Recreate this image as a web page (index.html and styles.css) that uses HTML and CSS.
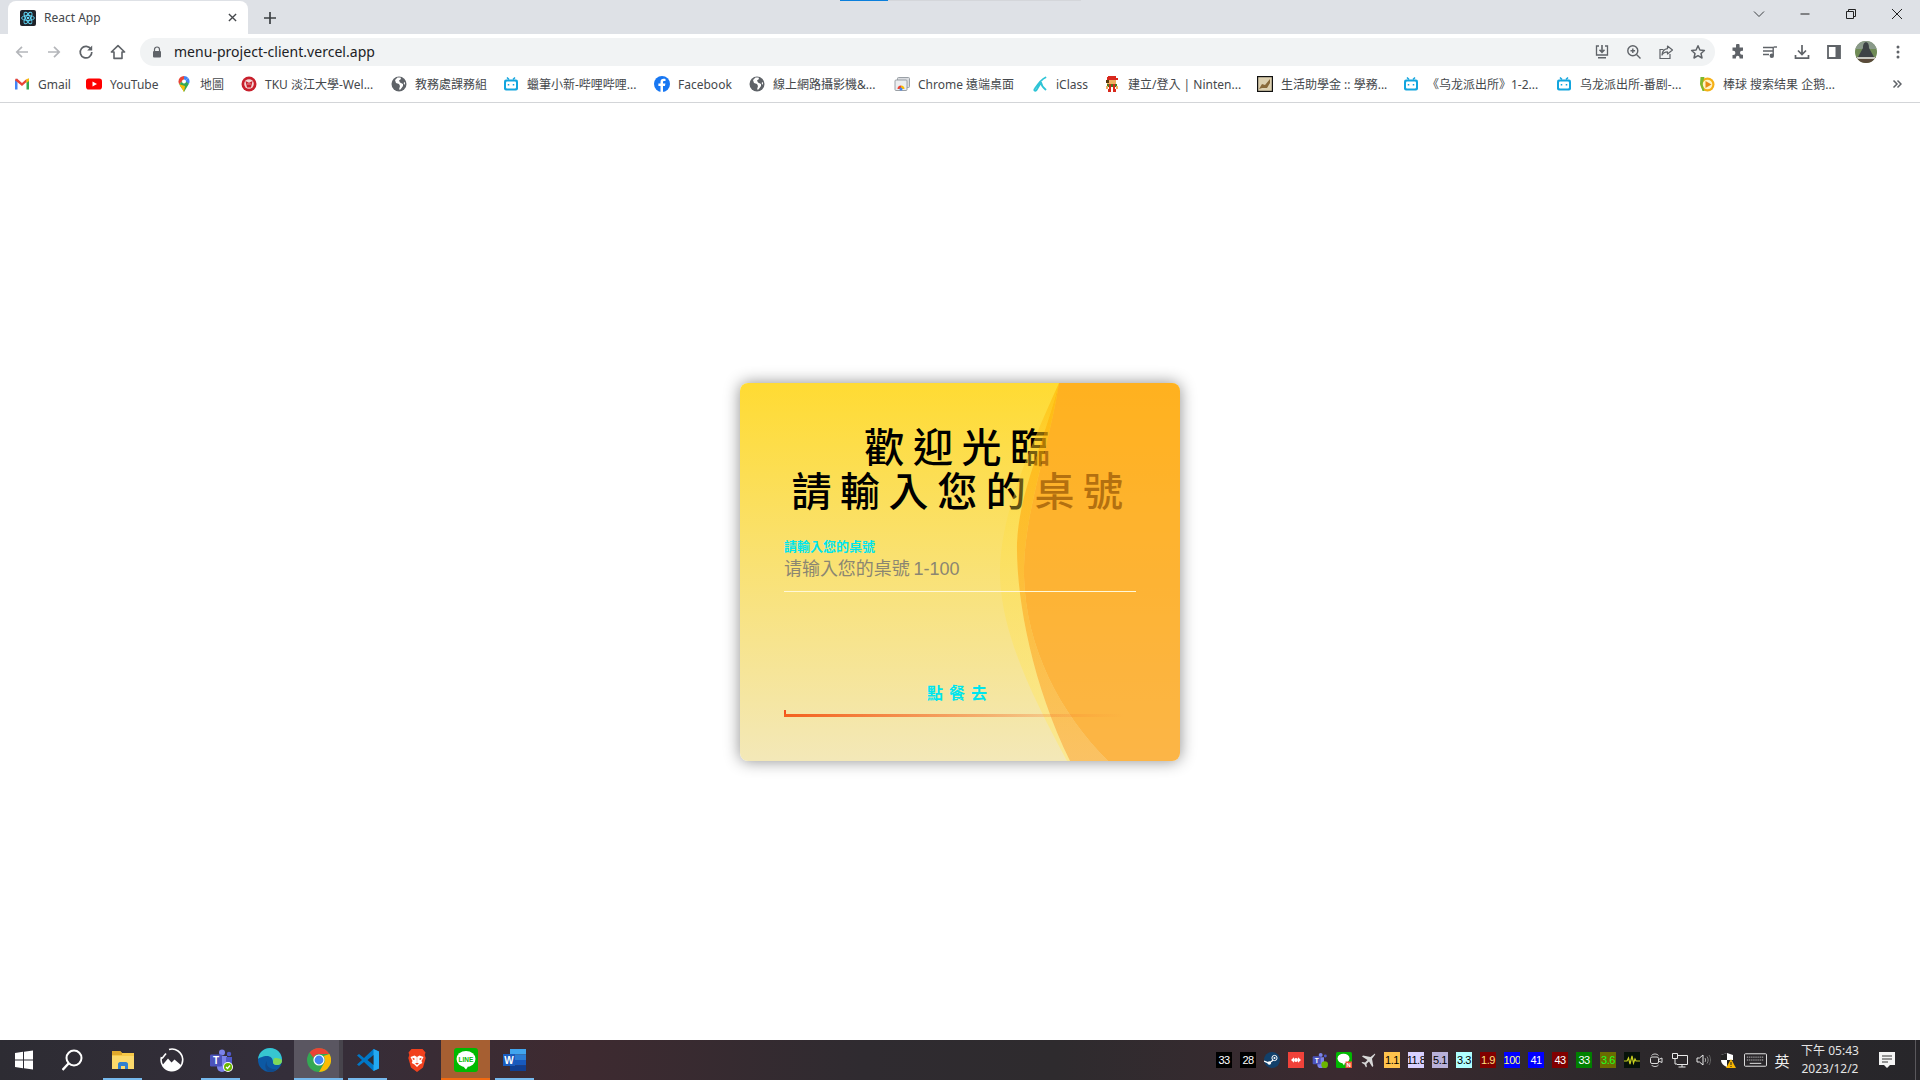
FILE: index.html
```html
<!DOCTYPE html>
<html lang="zh-Hant">
<head>
<meta charset="utf-8">
<title>React App</title>
<link rel="stylesheet" href="styles.css">
</head>
<body>
<header class="chrome">
  <div class="tabstrip">
    <div class="tab">
      <svg class="ic16" viewBox="0 0 16 16"><rect width="16" height="16" rx="2" fill="#20232a"/><g fill="none" stroke="#61dafb" stroke-width=".9"><ellipse cx="8" cy="8" rx="6.4" ry="2.5"/><ellipse cx="8" cy="8" rx="6.4" ry="2.5" transform="rotate(60 8 8)"/><ellipse cx="8" cy="8" rx="6.4" ry="2.5" transform="rotate(120 8 8)"/></g><circle cx="8" cy="8" r="1.3" fill="#61dafb"/></svg>
      <span class="tab-title">React App</span>
      <svg class="tab-x" viewBox="0 0 10 10"><path d="M1 1l8 8M9 1L1 9" stroke="#45484c" stroke-width="1.5"/></svg>
    </div>
    <svg class="newtab" viewBox="0 0 12 12"><path d="M6 0v12M0 6h12" stroke="#3c4043" stroke-width="1.7"/></svg>
    <div class="progress"><span></span></div>
    <div class="winctl">
      <svg class="wc" viewBox="0 0 12 12"><path d="M1 3.5l5 5 5-5" fill="none" stroke="#3c4043" stroke-width="1"/></svg>
      <svg class="wc" viewBox="0 0 12 12"><path d="M1.5 6h9" stroke="#222" stroke-width="1"/></svg>
      <svg class="wc" viewBox="0 0 12 12"><path d="M1.5 3.5h7v7h-7zM3.5 3.5v-2h7v7h-2" fill="none" stroke="#222" stroke-width="1"/></svg>
      <svg class="wc" viewBox="0 0 12 12"><path d="M1 1l10 10M11 1L1 11" stroke="#222" stroke-width="1"/></svg>
    </div>
  </div>
  <div class="toolbar">
    <svg class="tb first" viewBox="0 0 16 16"><path d="M14 8H3M8 2.8L2.8 8 8 13.2" fill="none" stroke="#b4b6ba" stroke-width="1.7"/></svg>
    <svg class="tb" viewBox="0 0 16 16"><path d="M2 8h11M8 2.8L13.2 8 8 13.2" fill="none" stroke="#b4b6ba" stroke-width="1.7"/></svg>
    <svg class="tb" viewBox="0 0 16 16"><path d="M13 5.2A5.8 5.8 0 1 0 13.8 8" fill="none" stroke="#5f6368" stroke-width="1.7"/><path d="M14.2 1.6v5h-5z" fill="#5f6368"/></svg>
    <svg class="tb" viewBox="0 0 16 16"><path d="M8 1.6L1.4 8H4v6.4h8V8h2.6zM6.8 14.4" fill="none" stroke="#5f6368" stroke-width="1.6" stroke-linejoin="round"/></svg>
    <div class="omnibox">
      <svg class="lock" viewBox="0 0 10 12"><path d="M2.5 5V3.5a2.5 2.5 0 0 1 5 0V5" fill="none" stroke="#5f6368" stroke-width="1.2"/><rect x="1" y="5" width="8" height="6.5" rx="1" fill="#5f6368"/></svg>
      <span class="url">menu-project-client.vercel.app</span>
      <div class="omni-actions">
        <svg class="oa" viewBox="0 0 16 16"><path d="M5 2H2.500v9h11V2H11" fill="none" stroke="#5f6368" stroke-width="1.300"/><path d="M8 1v7M5.500 5.800L8 8.400l2.500-2.600" fill="none" stroke="#5f6368" stroke-width="1.600"/><path d="M4 13h8v1.500H4z" fill="#5f6368"/></svg>
        <svg class="oa" viewBox="0 0 16 16"><circle cx="6.800" cy="6.800" r="5" fill="none" stroke="#5f6368" stroke-width="1.400"/><path d="M10.500 10.500l4 4M4.500 6.800h4.600M6.800 4.500v4.600" stroke="#5f6368" stroke-width="1.400"/></svg>
        <svg class="oa" viewBox="0 0 16 16"><path d="M5.500 5.500H2v9h10V10" fill="none" stroke="#5f6368" stroke-width="1.200"/><path d="M9.500 2l5 4-5 4V7.800C7 7.800 5 9 4 11c.3-3.500 2.500-6 5.500-6.300z" fill="none" stroke="#5f6368" stroke-width="1.200" stroke-linejoin="round"/></svg>
        <svg class="oa" viewBox="0 0 16 16"><path d="M8 1.800l1.900 4.200 4.500.5-3.400 3 1 4.500L8 11.700 4 14l1-4.500-3.400-3 4.500-.5z" fill="none" stroke="#5f6368" stroke-width="1.500" stroke-linejoin="round"/></svg>
      </div>
    </div>
    <div class="tb-right">
      <svg class="tbr" viewBox="0 0 16 16"><path d="M6 1.500a1.800 1.800 0 0 1 3.600 0V3.500H13v3.300h-1a2 2 0 0 0 0 4h1v3.700H9.500v-1a1.800 1.800 0 0 0-3.600 0v1H2.500v-3.500h.8a2.100 2.100 0 0 0 0-4.200h-.8V3.500H6z" fill="#5f6368"/></svg>
      <svg class="tbr" viewBox="0 0 16 16"><path d="M1 3.500h10M1 7h10M1 10.500h6" stroke="#5f6368" stroke-width="1.300"/><path d="M11.200 3v8.500" stroke="#5f6368" stroke-width="1.400"/><path d="M11.500 3H15" stroke="#5f6368" stroke-width="1.400"/><circle cx="9.800" cy="11.800" r="2.200" fill="#5f6368"/></svg>
      <svg class="tbr" viewBox="0 0 16 16"><path d="M8 1v9M4 6.500L8 10.500l4-4" fill="none" stroke="#5f6368" stroke-width="1.700"/><path d="M1.500 11v3.200h13V11" fill="none" stroke="#5f6368" stroke-width="1.700"/></svg>
      <svg class="tbr" viewBox="0 0 16 16"><path d="M2 2h12v12H2z" fill="none" stroke="#5f6368" stroke-width="1.800"/><path d="M9.500 2H14v12H9.500z" fill="#5f6368"/></svg>
      <svg class="avatar" viewBox="0 0 24 24"><defs><clipPath id="av"><circle cx="12" cy="12" r="11"/></clipPath></defs><g clip-path="url(#av)"><rect width="24" height="24" fill="#6f8a55"/><rect y="0" width="24" height="9" fill="#8a9a8a"/><path d="M12 2c3 1 3 4 3 6l5 9H4l5-9c0-2 0-5 3-6z" fill="#3d4245"/><rect y="17" width="24" height="7" fill="#5a4a3a"/><rect x="3" y="17" width="18" height="2" fill="#c8c8c0"/></g></svg>
      <svg class="tbr dots" viewBox="0 0 16 16"><circle cx="8" cy="3" r="1.500" fill="#5f6368"/><circle cx="8" cy="8" r="1.500" fill="#5f6368"/><circle cx="8" cy="13" r="1.500" fill="#5f6368"/></svg>
    </div>
  </div>
  <nav class="bookmarks">
    <a class="bm"><svg class="ic16" viewBox="0 0 16 16"><path d="M1 13.500V4l2.500-1.500V13.500z" fill="#4285f4"/><path d="M12.500 13.500V4L15 2.500v11z" fill="#34a853"/><path d="M3.500 3L8 7l4.500-4v3L8 10 1 4.200 1.800 2.600z" fill="#ea4335"/><path d="M12.500 3L15 2.400V5l-2.500 2z" fill="#fbbc04"/></svg><span>Gmail</span></a>
    <a class="bm"><svg class="ic16" viewBox="0 0 16 16"><rect y="2.500" width="16" height="11" rx="2.800" fill="#f00"/><path d="M6.500 5.500L11 8l-4.500 2.500z" fill="#fff"/></svg><span>YouTube</span></a>
    <a class="bm"><svg class="ic16" viewBox="0 0 16 16"><path d="M8 0a5.500 5.500 0 0 0-5.500 5.500c0 1 .3 2 .8 2.800L8 3.500z" fill="#ea4335"/><path d="M8 0a5.500 5.500 0 0 1 4.300 2L8 5.500z" fill="#4285f4"/><path d="M12.300 2a5.500 5.500 0 0 1 .5 6.100L8 5.500z" fill="#4285f4"/><path d="M3.300 8.300L8 3.500l4.800 4.600L8 16c-1.500-3-3.500-5-4.700-7.700z" fill="#34a853"/><path d="M3.300 8.300C4.500 11 6.500 13 8 16l1-6z" fill="#fbbc04"/><circle cx="8" cy="5.500" r="2" fill="#fff"/></svg><span>地圖</span></a>
    <a class="bm"><svg class="ic16" viewBox="0 0 16 16"><circle cx="8" cy="8" r="7.500" fill="#c8202c"/><circle cx="8" cy="8" r="4.800" fill="#f4d8d8"/><path d="M4.500 5L8 6.800 11.500 5 10 11.500H6z" fill="#c8202c"/><path d="M6.500 8h1M8.500 8h1" stroke="#fff"/></svg><span>TKU 淡江大學-Wel...</span></a>
    <a class="bm"><svg class="ic16" viewBox="0 0 16 16"><circle cx="8" cy="8" r="7.500" fill="#5f6368"/><path d="M6.500 1.500L4 4l1 3 3 1 1 2-1 3.500h1.500L12 10V8L9 6.500 8 4.500l2-1.500-.5-1.500zM14 6l-1.500 1 1.500 2z" fill="#fff"/></svg><span>教務處課務組</span></a>
    <a class="bm"><svg class="ic16" viewBox="0 0 16 16"><use href="#bili"/></svg><span>蠟筆小新-哔哩哔哩...</span></a>
    <a class="bm"><svg class="ic16" viewBox="0 0 16 16"><circle cx="8" cy="8" r="8" fill="#1877f2"/><path d="M9 16v-6h2l.4-2.400H9V6.200c0-.7.3-1.200 1.300-1.200h1.200V3c-.5-.1-1.200-.2-1.900-.2-2 0-3.100 1.200-3.100 3.200v1.600H4.400V10h2.100v6z" fill="#fff"/></svg><span>Facebook</span></a>
    <a class="bm"><svg class="ic16" viewBox="0 0 16 16"><circle cx="8" cy="8" r="7.500" fill="#5f6368"/><path d="M6.500 1.500L4 4l1 3 3 1 1 2-1 3.500h1.500L12 10V8L9 6.500 8 4.500l2-1.500-.5-1.500zM14 6l-1.500 1 1.500 2z" fill="#fff"/></svg><span>線上網路攝影機&amp;...</span></a>
    <a class="bm"><svg class="ic16" viewBox="0 0 16 16"><rect x="3.500" y="1.500" width="12" height="10" rx="1" fill="#dadce0" stroke="#9aa0a6"/><rect x="1" y="4" width="12" height="10.500" rx="1" fill="#eceef0" stroke="#9aa0a6"/><path d="M3.500 13a3.500 3.500 0 0 1 3.500-3.500V13z" fill="#ea4335"/><path d="M7 9.500A3.500 3.500 0 0 1 10.500 13H7z" fill="#fbbc04"/><circle cx="7" cy="13" r="1.500" fill="#4285f4"/></svg><span>Chrome 遠端桌面</span></a>
    <a class="bm"><svg class="ic16" viewBox="0 0 16 16"><path d="M13.500 1.500C10 3 6 8 3 12.500c-1.500 2 0 3 1.500 1.500C7 10 8 8 9 6.500c.5 3 2 5 4.500 7" fill="none" stroke="#2ec4d6" stroke-width="1.800" stroke-linecap="round"/></svg><span>iClass</span></a>
    <a class="bm"><svg class="ic16" viewBox="0 0 16 16" shape-rendering="crispEdges"><path d="M4 0h8v2h2v2H3V1z" fill="#d8281c"/><path d="M3 4h9v4H3z" fill="#f0b060"/><path d="M2 4h3v3H2z" fill="#5a3a10"/><path d="M3 8h10v3H3z" fill="#4a7a20"/><path d="M5 8h2v8H4v-3h1zM9 8h2v5h1v3H9z" fill="#d8281c"/><path d="M2 10h2v3H2zM12 10h2v3h-2z" fill="#f0b060"/></svg><span>建立/登入 | Ninten...</span></a>
    <a class="bm"><svg class="ic16" viewBox="0 0 16 16"><rect x=".6" y=".6" width="14.800" height="14.800" fill="#ddd0b0" stroke="#111" stroke-width="1.200"/><path d="M2 13l3-5 3 1 5-6v4l-3 5H5z" fill="#8a6a3a"/></svg><span>生活助學金 :: 學務...</span></a>
    <a class="bm"><svg class="ic16" viewBox="0 0 16 16"><use href="#bili"/></svg><span>《乌龙派出所》1-2...</span></a>
    <a class="bm"><svg class="ic16" viewBox="0 0 16 16"><use href="#bili"/></svg><span>乌龙派出所-番剧-...</span></a>
    <a class="bm"><svg class="ic16" viewBox="0 0 16 16"><circle cx="8.500" cy="8.500" r="7" fill="#f5b015"/><circle cx="8.500" cy="8.500" r="4.800" fill="#fff3c4"/><path d="M6.500 5l6 3.500-6 3.500z" fill="#e88a10"/><path d="M1.500 1h4l-2 7 2 7h-2L1 8z" fill="#7cb82f"/></svg><span>棒球 搜索结果 企鹅...</span></a>
    <i></i>
    <svg class="more" viewBox="0 0 10 10"><path d="M1.500 1.500L5 5 1.500 8.500M5.500 1.500L9 5 5.500 8.500" fill="none" stroke="#5f6368" stroke-width="1.500"/></svg>
  </nav>
</header>

<main class="page">
  <section class="card">
    <h1 class="title">歡迎光臨<br>請輸入您的桌號</h1>
    <svg class="waves" viewBox="0 0 440 378" preserveAspectRatio="none">
      <defs>
        <linearGradient id="w1" x1="0" y1="0" x2="0" y2="1"><stop offset="0" stop-color="#ffb400" stop-opacity=".6"/><stop offset=".35" stop-color="#ffdc40" stop-opacity=".35"/><stop offset="1" stop-color="#ffe97a" stop-opacity=".6"/></linearGradient>
        <linearGradient id="w2" x1="0" y1="0" x2="0" y2="1"><stop offset="0" stop-color="#ffb000" stop-opacity=".7"/><stop offset="1" stop-color="#ffa82c" stop-opacity=".6"/></linearGradient>
      </defs>
      <path fill="url(#w1)" d="M319 0C292 60 258 135 260 194C262 255 296 320 327 378H330C292 300 276 215 277 160C279 110 302 65 319 0z"/>
      <path fill="url(#w2)" d="M319 0C302 65 279 110 277 160C276 215 292 300 330 378H368C320 330 286 265 284 194C283 130 308 70 319 0z"/>
      <path fill="#ffa017" fill-opacity=".7" d="M319 0C308 70 283 130 284 194C286 265 320 330 368 378H440V0z"/>
    </svg>
    <div class="field">
      <label class="field-label" for="table">請輸入您的桌號</label>
      <input class="field-input" id="table" type="text" placeholder="请输入您的桌號 1-100">
    </div>
    <button class="go" type="button">點餐去</button>
  </section>
</main>

<footer class="taskbar">
  <div class="apps">
    <div class="cell"><svg class="ti" viewBox="1 0 24 24"><path d="M3 5l8-1.200V11.400H3zM12 3.700L21 2.500v8.900h-9zM3 12.500h8v7.700l-8-1.200zM12 12.500h9v9l-9-1.200z" fill="#fff"/></svg></div>
    <div class="cell"><svg class="ti" viewBox="2 0 24 24"><circle cx="14" cy="10" r="7.500" fill="none" stroke="#fff" stroke-width="2"/><path d="M8.500 15.500L2.500 22" stroke="#fff" stroke-width="2.400"/></svg></div>
    <div class="cell run"><svg class="ti" viewBox="0 0 24 24"><path d="M1 3h8l2 2h12v16H1z" fill="#f7c948"/><path d="M1 3h8l2 2v2H1z" fill="#e0a92c"/><path d="M1 8h22v13H1z" fill="#fbd96b"/><path d="M7 21v-5c0-1 1-2 2-2h6c1 0 2 1 2 2v5h-3v-3h-4v3z" fill="#2f80d0"/></svg></div>
    <div class="cell"><svg class="ti" viewBox="0 0 24 24"><path d="M9 1.500A10.800 10.800 0 1 1 1.500 9" fill="none" stroke="#fff" stroke-width="1.600"/><path d="M2.500 17L8 10.500l3.500 4 3-3L21.500 17.500A11 11 0 0 1 2.500 17z" fill="#fff"/><path d="M2 10.500L6 5.500" stroke="#fff" stroke-width="1.600"/></svg></div>
    <div class="cell run"><svg class="ti" viewBox="0 0 24 24"><circle cx="13" cy="4.500" r="3" fill="#7b83eb"/><circle cx="20" cy="6" r="2.200" fill="#5059c9"/><path d="M8 8h10v11a5 5 0 0 1-10 0z" fill="#7b83eb"/><path d="M17 9h6v8a3 3 0 0 1-6 0z" fill="#5059c9"/><rect x="1" y="6.500" width="12" height="12" rx="1.200" fill="#4b53bc"/><text x="7" y="16" class="svgt" font-size="10" fill="#fff" text-anchor="middle">T</text><circle cx="19" cy="19" r="5" fill="#fff"/><circle cx="19" cy="19" r="4" fill="#6bb700"/><path d="M17 19l1.500 1.500 2.500-3" fill="none" stroke="#fff" stroke-width="1.200"/></svg></div>
    <div class="cell"><svg class="ti" viewBox="0 0 24 24"><circle cx="12" cy="12" r="12" fill="#0c59a4"/><path d="M0 11C1 4 6 0 12 0c7 0 12 5 12 12 0 3-2 5-5 5-3 0-4-1-4-3 0-4-3-6-6-6-4 0-8 2-9 3z" fill="#37c6d0"/><path d="M13 24C7 24 6 17 9 13c-2 4 3 9 9 8-1 2-3 3-5 3z" fill="#114a8b"/><path d="M17 10c4 0 7 1 7 3 0 2-2 4-5 4-3 0-4-2-4-3 0-2 1-4 2-4z" fill="#7fd858"/></svg></div>
    <div class="cell active run"><svg class="ti" viewBox="0 0 24 24"><use href="#chrome"/></svg></div>
    <div class="cell run"><svg class="ti" viewBox="0 0 24 24"><path d="M17.500 1L23 3.500v17L17.500 23 8 14l-5 4-2-1.500L6 12 1 7.500 3 6l5 4z" fill="#0078c8"/><path d="M17.500 1L23 3.500v17L17.500 23z" fill="#23a9f2"/><path d="M17.500 7l-6 5 6 5z" fill="#2e2b33"/></svg></div>
    <div class="cell"><svg class="ti" viewBox="0 0 24 24"><path d="M6.500 1h11l3 3.500-.8 2.500 1 3-2.700 9.500L12 24l-6-4.500L3.300 10l1-3-.8-2.500z" fill="#f1411e"/><path d="M5.500 9l4-1.500L12 9l2.500-1.500 4 1.500-2 4 .8 2-2.800 1.500L12 19l-2.500-2.500L6.700 15l.8-2z" fill="#fff"/><path d="M7.500 9.800l2 .8v1.200H8zM16.500 9.800l-2 .8v1.200H16z" fill="#f1411e"/><path d="M10 15h4l-2 2z" fill="#f1411e"/><path d="M12 9v6" stroke="#f7b8a8" stroke-width=".8"/></svg></div>
    <div class="cell line"><svg class="ti" viewBox="0 0 24 24"><rect width="24" height="24" rx="3" fill="#00b900"/><ellipse cx="12" cy="11" rx="9.500" ry="8" fill="#fff"/><path d="M9 18l3 3.500 2-3z" fill="#fff"/><text x="12" y="13.500" class="svgt" font-size="6.500" fill="#00b900" text-anchor="middle">LINE</text></svg></div>
    <div class="cell run"><svg class="ti" viewBox="0 0 24 24"><rect x="7" y="1" width="16" height="5.500" fill="#41a5ee"/><rect x="7" y="6.500" width="16" height="5.500" fill="#2b7cd3"/><rect x="7" y="12" width="16" height="5.500" fill="#185abd"/><rect x="7" y="17.500" width="16" height="5.500" fill="#103f91"/><rect x="0" y="6" width="12" height="12" fill="#1a5cbe"/><text x="6" y="15.500" class="svgt" font-size="10" fill="#fff" text-anchor="middle">W</text></svg></div>
  </div>
  <div class="tray">
    <div class="tc"><b class="num n-k">33</b></div>
    <div class="tc"><b class="num n-k">28</b></div>
    <div class="tc"><svg class="t16" viewBox="0 0 16 16"><circle cx="8" cy="8" r="8" fill="#12406a"/><circle cx="10.500" cy="6" r="2.600" fill="none" stroke="#fff" stroke-width="1"/><circle cx="10.500" cy="6" r="1" fill="#fff"/><path d="M0 9l5 2.200 4-3" fill="none" stroke="#fff" stroke-width="1.300"/><circle cx="5.300" cy="11" r="1.800" fill="#fff"/></svg></div>
    <div class="tc"><svg class="t16" viewBox="0 0 16 16"><rect width="16" height="16" fill="#f0423a"/><path d="M3 8l3-2.800v5.600zM13 8l-3-2.800v5.600z" fill="#fff"/><circle cx="8" cy="8" r="2" fill="#fff"/></svg></div>
    <div class="tc"><svg class="t16" viewBox="0 0 24 24"><circle cx="13" cy="4.500" r="3" fill="#7b83eb"/><circle cx="20" cy="6" r="2.200" fill="#5059c9"/><path d="M8 8h10v11a5 5 0 0 1-10 0z" fill="#7b83eb"/><rect x="1" y="6.500" width="12" height="12" rx="1.200" fill="#4b53bc"/><text x="7" y="16" class="svgt" font-size="10" fill="#fff" text-anchor="middle">T</text><circle cx="19" cy="19" r="5" fill="#6bb700"/></svg></div>
    <div class="tc"><svg class="t16" viewBox="0 0 16 16"><rect width="16" height="16" rx="1.500" fill="#00b900"/><ellipse cx="7.500" cy="6.500" rx="6" ry="4.800" fill="#fff"/><path d="M6 10.500l2 3 1-3z" fill="#fff"/><rect x="9.500" y="9.500" width="6.500" height="6.500" fill="#f0523a"/><text x="12.700" y="15" class="svgt" font-size="6" fill="#fff" text-anchor="middle">N</text></svg></div>
    <div class="tc"><svg class="t16" viewBox="0 0 16 16"><path d="M15 1.500L10.500 5 3 3.500 2 4.500 7.500 8 5 10.500 2.500 10l-1 .8 3 1.600 1.500 3 .9-1-.5-2.400L9 9.500l3.300 5.500 1-1L12 6.800 15.200 2.500z" fill="#d8d8d8"/></svg></div>
    <div class="tc"><b class="num n-1">1.1</b></div>
    <div class="tc"><b class="num n-2">11.8</b></div>
    <div class="tc"><b class="num n-3">5.1</b></div>
    <div class="tc"><b class="num n-4">3.3</b></div>
    <div class="tc"><b class="num n-5">1.9</b></div>
    <div class="tc"><b class="num n-6">100</b></div>
    <div class="tc"><b class="num n-7">41</b></div>
    <div class="tc"><b class="num n-8">43</b></div>
    <div class="tc"><b class="num n-9">33</b></div>
    <div class="tc"><b class="num n-10">3.6</b></div>
    <div class="tc"><svg class="t16" viewBox="0 0 16 16"><rect width="16" height="16" fill="#06120a"/><path d="M0 9h3l1.500-3 1.500 6 2-8 1.500 7 1.500-4 1 2h4" fill="none" stroke="#c8d020" stroke-width="1.200"/></svg></div>
    <div class="tc"><svg class="t16" viewBox="0 0 16 16"><path d="M3.500 3.500C5 1.500 9 1.500 10.500 3.500M3.500 13C5 15 9 15 10.500 13" fill="none" stroke="#ddd" stroke-width=".9"/><rect x="2.500" y="5" width="8" height="6.500" rx="1.500" fill="none" stroke="#ddd"/><path d="M10.500 7.500L14 6v4.500l-3.500-1.500" fill="none" stroke="#ddd"/></svg></div>
    <div class="tc"><svg class="t16" viewBox="0 0 16 16"><path d="M5 3.500h10.500v9H5M10 12.500V15M6.500 15h7M.5 1.500h5v5h-5zM3 6.500v5.500h2" fill="none" stroke="#e8e8e8" stroke-width="1"/></svg></div>
    <div class="tc"><svg class="t16" viewBox="0 0 16 16"><path d="M1 6h2.500L7 3v10L3.500 10H1z" fill="none" stroke="#e8e8e8"/><path d="M9 6c.8 1 .8 3 0 4" fill="none" stroke="#aaa"/><path d="M11 4.500c1.500 2 1.500 5 0 7" fill="none" stroke="#888"/><path d="M13 3c2 3 2 7 0 10" fill="none" stroke="#666"/></svg></div>
    <div class="tc"><svg class="t16" viewBox="0 0 16 16"><path d="M1 3l6-2 6 2v5c0 3.500-3 6-6 7-3-1-6-3.500-6-7z" fill="#fff"/><path d="M7 1v7H1V3zM7 8h6c0 3.500-3 6-6 7z" fill="#222"/><path d="M11 7l5 9H6z" fill="#f7b500"/><path d="M11 10v3M11 14v1" stroke="#222"/></svg></div>
    <div class="tc tc-kbd"><svg class="kbd" viewBox="0 0 24 14"><rect x=".5" y=".5" width="23" height="13" rx="1" fill="none" stroke="#e8e8e8"/><path d="M3 4h18M3 7h18" stroke="#e8e8e8" stroke-dasharray="1 1"/><path d="M6 10.500h12" stroke="#e8e8e8"/></svg></div>
    <div class="tc ime">英</div>
    <div class="clock"><span>下午 05:43</span><span>2023/12/2</span></div>
    <div class="notif"><svg class="t20" viewBox="0 0 20 20"><path d="M2 2h16v13h-5l-3 3-3-3H2z" fill="#f4f4f4"/><path d="M5 6h10M5 9h10M5 12h6" stroke="#333"/></svg></div>
    <div class="showdesk"></div>
  </div>
</footer>

<svg class="defs" viewBox="0 0 1 1">
  <defs>
    <symbol id="bili" viewBox="0 0 16 16"><path d="M4 1.500l2 2M12 1.500l-2 2" stroke="#12a5de" stroke-width="1.500"/><rect x="1" y="3.500" width="14" height="11" rx="2" fill="#12a5de"/><rect x="3" y="5.500" width="10" height="7" rx="1" fill="#fff"/><path d="M5.500 8v1.600M10.500 8v1.600" stroke="#12a5de" stroke-width="1.500"/></symbol>
    <symbol id="chrome" viewBox="0 0 24 24"><circle cx="12" cy="12" r="12" fill="#34a853"/><path d="M12 0a12 12 0 0 1 10.400 6H12a6 6 0 0 0-5.600 3.800L2.600 4.500A12 12 0 0 1 12 0z" fill="#ea4335"/><path d="M22.400 6A12 12 0 0 1 12 24l5-8.800A6 6 0 0 0 16.500 8z" fill="#fbbc04"/><circle cx="12" cy="12" r="5.600" fill="#fff"/><circle cx="12" cy="12" r="4.400" fill="#4285f4"/></symbol>
  </defs>
</svg>
</body>
</html>
```
FILE: styles.css
```css
* { box-sizing: border-box; }
html, body { margin: 0; height: 100%; }
body {
  display: flex;
  flex-direction: column;
  height: 100vh;
  overflow: hidden;
  background: #fff;
  font-family: "Noto Sans", "Noto Sans CJK TC", sans-serif;
  color: #3c4043;
}
svg { display: block; flex: none; }
.defs { position: absolute; width: 0; height: 0; }
.ic16 { width: 16px; height: 16px; }

/* browser chrome */
.chrome { flex: none; height: 103px; border-bottom: 1px solid #d3d5d8; }
.tabstrip {
  position: relative;
  display: flex;
  align-items: center;
  height: 34px;
  padding-left: 8px;
  background: #dee1e6;
}
.tab {
  display: flex;
  align-items: center;
  align-self: flex-end;
  width: 240px;
  height: 33px;
  padding: 0 11px 0 12px;
  background: #fff;
  border-radius: 8px 8px 0 0;
}
.tab-title { margin-left: 8px; font-size: 12px; color: #45484c; flex: 1; }
.tab-x { width: 9px; height: 9px; }
.newtab { width: 12px; height: 12px; margin-left: 16px; margin-top: 1px; }
.progress {
  position: absolute;
  left: 840px;
  top: 0;
  width: 241px;
  height: 1px;
  background: #d4d6da;
}
.progress span { display: block; width: 48px; height: 1px; background: #0a7fdc; }
.winctl {
  display: flex;
  margin-left: auto;
  margin-right: 17px;
  margin-top: -7px;
  gap: 34px;
}
.wc { width: 12px; height: 12px; }
.toolbar {
  display: flex;
  align-items: center;
  height: 32px;
  padding: 4px 0 0 14px;
  background: #fff;
}
.tb { width: 16px; height: 16px; margin-right: 16px; }
.omnibox {
  display: flex;
  align-items: center;
  width: 1575px;
  height: 28px;
  margin-left: -2px;
  padding: 0 9px 0 12px;
  background: #f1f3f4;
  border-radius: 14px;
}
.lock { width: 10px; height: 12px; margin-right: 12px; }
.url { margin-top: -2px; font-size: 14px; letter-spacing: .03px; color: #202124; }
.omni-actions { display: flex; gap: 16px; margin-left: auto; }
.oa { width: 16px; height: 16px; }
.tb-right { display: flex; align-items: center; margin-left: 15px; gap: 16px; }
.tbr { width: 16px; height: 16px; }
.avatar { width: 24px; height: 24px; margin: 0 -4px; }
.bookmarks {
  display: grid;
  grid-template-columns: 72px 90px 65px 150px 112px 151px 95px 145px 138px 72px 153px 146px 153px 143px 170px 1fr 24px;
  align-items: center;
  height: 36px;
  padding-left: 14px;
  padding-right: 18px;
  background: #fff;
  font-size: 12px;
}
.bm { display: flex; align-items: center; gap: 8px; white-space: nowrap; color: #45484c; }
.more { width: 10px; height: 10px; justify-self: end; }

/* main */
.page {
  flex: 1;
  min-height: 0;
  display: flex;
  align-items: center;
  justify-content: center;
}
.card {
  position: relative;
  width: 440px;
  height: 378px;
  padding: 40px 44px 0;
  border-radius: 8px;
  background: linear-gradient(180deg, #ffdb33 0%, #f3e8b8 100%);
  box-shadow: 0 0 16px rgba(0, 0, 0, .45);
  overflow: clip;
  overflow-clip-margin: 0;
}
.title {
  margin: 0;
  padding-left: 3px;
  font: 500 40px/44px "Noto Sans CJK TC", sans-serif;
  letter-spacing: 8.6px;
  text-align: center;
  white-space: nowrap;
  color: #000;
}
.waves { position: absolute; left: 0; top: 0; width: 440px; height: 378px; pointer-events: none; }
.field { position: relative; z-index: 1; margin-top: 27px; }
.field-label {
  display: block;
  height: 16px;
  font: 700 13px/16px "Noto Sans CJK TC", sans-serif;
  color: #00e5ee;
}
.field-input {
  display: block;
  width: 100%;
  height: 38px;
  padding: 0 0 5px;
  border: 0;
  border-bottom: 1px solid #fff8d8;
  background: transparent;
  outline: 0;
  font: 18px "Liberation Sans", "Noto Sans CJK SC", sans-serif;
  word-spacing: -1px;
  letter-spacing: -.05px;
}
.field-input::placeholder { color: #8b8672; opacity: 1; }
.go {
  position: relative;
  z-index: 1;
  display: block;
  width: 100%;
  height: 36px;
  margin-top: 89px;
  padding: 0 0 18px;
  border: 0;
  background: transparent;
  font: 700 16px/22px "Noto Sans CJK TC", sans-serif;
  letter-spacing: 6px;
  color: #00e5ee;
}
.go::before {
  content: "";
  position: absolute;
  left: 0;
  bottom: 0;
  width: 2px;
  height: 7px;
  background: #f4511e;
}
.go::after {
  content: "";
  position: absolute;
  left: 0;
  bottom: 0;
  width: 340px;
  height: 3px;
  background: linear-gradient(90deg, #f4601e, rgba(244, 110, 40, .45) 60%, rgba(244, 110, 40, 0));
}

/* taskbar */
.taskbar {
  flex: none;
  display: flex;
  justify-content: space-between;
  height: 40px;
  background: linear-gradient(90deg, #2d2c33 0%, #342e3a 15%, #3e2a30 30%, #2f2b30 45%, #2e2b2e 55%, #3b2a30 70%, #2c282b 85%, #27262a 100%);
}
.apps { display: flex; }
.cell {
  position: relative;
  display: flex;
  align-items: center;
  justify-content: center;
  width: 49px;
  height: 40px;
}
.ti { width: 24px; height: 24px; }
.run::after {
  content: "";
  position: absolute;
  left: 5px;
  right: 5px;
  bottom: 0;
  height: 2px;
  background: #76b9ed;
}
.active { background: #5a5661; }
.active::before {
  content: "";
  position: absolute;
  right: 0;
  top: 0;
  bottom: 0;
  width: 4px;
  background: #47444c;
}
.active::after { left: 0; right: 0; }
.line { background: #a65f32; box-shadow: inset 0 -2px 0 #f26a10; }
.svgt { font-family: "Liberation Sans", sans-serif; font-weight: 700; }
.tray { display: flex; align-items: center; color: #f0f0f0; }
.tc {
  display: flex;
  align-items: center;
  justify-content: center;
  width: 24px;
  height: 40px;
}
.t16 { width: 16px; height: 16px; }
.t20 { width: 20px; height: 20px; }
.kbd { width: 23px; height: 14px; }
.tc-kbd { width: 30px; }
.ime { font: 15px "Noto Sans CJK TC", sans-serif; }
.num {
  display: flex;
  align-items: center;
  justify-content: center;
  width: 16px;
  height: 16px;
  overflow: hidden;
  font: 400 11px/16px "Liberation Sans", sans-serif;
  letter-spacing: -.5px;
}
.n-k { background: #000; color: #fff; }
.n-1 { background: #ffc34d; color: #000; }
.n-2 { background: #d8d0ff; color: #000; }
.n-3 { background: #b8b0d8; color: #000; }
.n-4 { background: #b0ffff; color: #000; }
.n-5 { background: #800000; color: #ffe080; }
.n-6 { background: #0000ff; color: #ffff80; }
.n-7 { background: #0000ff; color: #fff; }
.n-8 { background: #800000; color: #fff; }
.n-9 { background: #008000; color: #fff; }
.n-10 { background: #6b6b00; color: #20ff20; }
.clock {
  display: flex;
  flex-direction: column;
  align-items: center;
  width: 72px;
  font: 12px/18px "Noto Sans", "Noto Sans CJK TC", sans-serif;
  color: #e4e4e4;
}
.notif { display: flex; justify-content: center; width: 42px; }
.showdesk { width: 12px; height: 40px; box-shadow: inset -4px 0 0 #27262a, inset -5px 0 0 #5a585c; }
```
